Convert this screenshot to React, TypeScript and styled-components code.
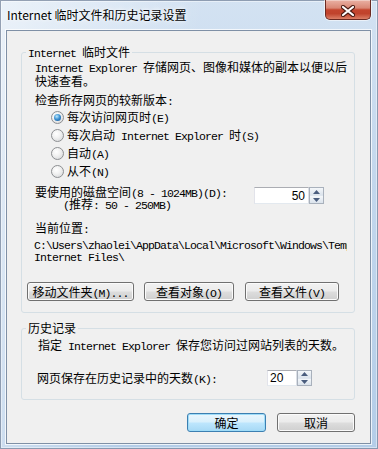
import React from 'react'
import styled, { createGlobalStyle, css } from 'styled-components'

const GlobalStyle = createGlobalStyle`
  html, body {
    margin: 0;
    padding: 0;
    background: #ffffff;
  }
  body {
    font-family: "Noto Sans CJK SC", sans-serif;
    font-size: 12px;
    color: #000;
  }
`

const Win = styled.div`
  width: 378px;
  height: 449px;
  box-sizing: border-box;
  display: flex;
  flex-direction: column;
  padding: 0 7px 6px 6px;
  background:
    linear-gradient(100deg, rgba(255, 255, 255, 0.55) 0%, rgba(255, 255, 255, 0) 45%),
    linear-gradient(180deg, #d3e2f2 0%, #c3d7ed 40%, #b4cde8 100%);
  box-shadow: inset 0 0 0 1px rgba(70, 90, 120, 0.55), inset 0 0 0 2px rgba(255, 255, 255, 0.45);
`

const TitleBar = styled.div`
  height: 30px;
  flex: none;
  display: flex;
  align-items: flex-start;
  justify-content: space-between;
`

const Title = styled.div`
  margin: 7px 0 0 1px;
  font-family: "Noto Sans CJK SC", sans-serif;
  font-size: 12px;
  line-height: 16px;
  color: #000;
  text-shadow: 0 0 6px rgba(255, 255, 255, 0.95), 0 0 3px rgba(255, 255, 255, 0.9);
`

const CloseBtn = styled.div`
  width: 46px;
  height: 20px;
  box-sizing: border-box;
  display: flex;
  align-items: center;
  justify-content: center;
  padding-top: 2px;
  border: 1px solid #6b2a22;
  border-top: none;
  border-radius: 0 0 5px 5px;
  background: linear-gradient(180deg, #eab1a4 0%, #d98775 42%, #c4452e 52%, #c0432c 72%, #dc7f66 100%);
  box-shadow: 0 0 0 1px rgba(255, 255, 255, 0.55), inset 0 1px 0 rgba(255, 255, 255, 0.35);
`

const Client = styled.div`
  flex: 1;
  display: flex;
  flex-direction: column;
  padding: 0 15px 11px 14px;
  background: #f0f0f0;
  border: 1px solid #7f90a6;
  box-shadow: 0 0 0 1px rgba(255, 255, 255, 0.75);
`

const Group = styled.fieldset<{ $top: number }>`
  margin: ${p => p.$top}px 0 0 0;
  padding: 0;
  border: 1px solid #d5dfe5;
  border-radius: 3px;
  min-width: 0;
`

const Legend = styled.legend`
  margin-left: 4px;
  padding: 0 2px;
  line-height: 12px;
  font-size: 12px;
`

const GroupBody = styled.div<{ $bottom: number }>`
  padding: 0 0 ${p => p.$bottom}px 13px;
  display: flex;
  flex-direction: column;
`

const Text = styled.div<{ $lh?: number; $top?: number; $indent?: number }>`
  line-height: ${p => p.$lh ?? 12}px;
  margin-top: ${p => p.$top ?? 0}px;
  padding-left: ${p => p.$indent ?? 0}px;
  white-space: nowrap;
`

const Lat = styled.span`
  font-family: "Liberation Mono", monospace;
  font-size: 11.5px;
  letter-spacing: -0.9px;
  line-height: 0;
  white-space: pre;
`

const RadioList = styled.div`
  margin-top: 1px;
  padding-left: 16px;
  display: flex;
  flex-direction: column;
`

const RadioRow = styled.div`
  height: 18px;
  display: flex;
  align-items: center;
  gap: 3px;
  line-height: 12px;
`

const Radio = styled.span<{ $on?: boolean }>`
  position: relative;
  flex: none;
  width: 13px;
  height: 13px;
  box-sizing: border-box;
  border-radius: 50%;
  border: 1px solid #8d8f92;
  background: radial-gradient(circle at 40% 35%, #ffffff 0%, #f2f2f2 40%, #d0d2d4 100%);
  ${p => p.$on && css`
    &::after {
      content: "";
      position: absolute;
      left: 2px;
      top: 2px;
      width: 7px;
      height: 7px;
      border-radius: 50%;
      background: radial-gradient(circle at 40% 35%, #bfe9fb 0%, #3f94d4 45%, #0d4a8c 100%);
    }
  `}
`

const FieldRow = styled.div<{ $label: number; $top: number; $center?: boolean }>`
  display: grid;
  grid-template-columns: ${p => p.$label}px auto;
  align-items: ${p => (p.$center ? 'center' : 'start')};
  margin-top: ${p => p.$top}px;
`

const Spin = styled.div<{ $w: number; $h: number; $top?: number }>`
  display: flex;
  width: ${p => p.$w}px;
  height: ${p => p.$h}px;
  margin-top: ${p => p.$top ?? 0}px;
`

const SpinField = styled.div<{ $right?: boolean }>`
  flex: 1;
  display: flex;
  align-items: center;
  justify-content: ${p => (p.$right ? 'flex-end' : 'flex-start')};
  padding: 0 3px 0 2px;
  background: #ffffff;
  border: 1px solid;
  border-color: #abadb3 #dbdfe6 #e3e9ef #e2e3ea;
  font-family: "Liberation Sans", Arial, sans-serif;
  font-size: 12px;
`

const SpinButtons = styled.div`
  width: 15px;
  flex: none;
  box-sizing: border-box;
  display: flex;
  flex-direction: column;
  border: 1px solid #a9b1bc;
  background: #dfe6ee;
  gap: 1px;
`

const SpinBtn = styled.div`
  flex: 1;
  display: flex;
  align-items: center;
  justify-content: center;
  background: linear-gradient(180deg, #f4f7fa 0%, #dbe3ec 100%);
`

const PathBox = styled.div`
  margin-top: 4px;
  margin-left: -1px;
  padding-bottom: 2px;
  width: 313px;
  overflow: hidden;
`

const ButtonRow = styled.div<{ $top: number; $shift?: number }>`
  display: flex;
  margin-top: ${p => p.$top}px;
  margin-left: ${p => p.$shift ?? 0}px;
`

const Button = styled.div<{ $w: number; $gap?: number; $primary?: boolean }>`
  width: ${p => p.$w}px;
  height: 19px;
  box-sizing: border-box;
  margin-left: ${p => p.$gap ?? 0}px;
  display: flex;
  align-items: center;
  justify-content: center;
  line-height: 12px;
  border: 1px solid #707070;
  border-radius: 3px;
  background: linear-gradient(180deg, #f2f2f2 0%, #ebebeb 48%, #dddddd 52%, #cfcfcf 100%);
  box-shadow: inset 0 0 0 1px #fbfbfb;
  ${p => p.$primary && css`
    border-color: #3c7fb1;
    background: linear-gradient(180deg, #eaf6fd 0%, #d9f0fc 48%, #bee6fd 52%, #a7d9f5 100%);
    box-shadow: inset 0 0 0 1px #9fdcf8;
  `}
`

const Footer = styled.div`
  display: flex;
  justify-content: flex-end;
  margin-top: 13px;
`

const T = ({ s }: { s: string }) => (
  <>
    {s
      .split(/([\x20-\x7e]+)/)
      .filter(Boolean)
      .map((part, i) => (/^[\x20-\x7e]+$/.test(part) ? <Lat key={i}>{part}</Lat> : part))}
  </>
)

const Arrow = ({ up }: { up?: boolean }) => (
  <svg width="7" height="4" viewBox="0 0 7 4">
    <path d={up ? 'M0 4 L3.5 0 L7 4 Z' : 'M0 0 L3.5 4 L7 0 Z'} fill="#4a5d7e" />
  </svg>
)

const SpinBox = ({ value, w, h, right, top }: { value: string; w: number; h: number; right?: boolean; top?: number }) => (
  <Spin $w={w} $h={h} $top={top}>
    <SpinField $right={right}>{value}</SpinField>
    <SpinButtons>
      <SpinBtn><Arrow up /></SpinBtn>
      <SpinBtn><Arrow /></SpinBtn>
    </SpinButtons>
  </Spin>
)

const radios = [
  { label: '每次访问网页时(E)', on: true },
  { label: '每次启动 Internet Explorer 时(S)' },
  { label: '自动(A)' },
  { label: '从不(N)' },
]

export default function App() {
  return (
    <>
      <GlobalStyle />
      <Win>
        <TitleBar>
          <Title>Internet 临时文件和历史记录设置</Title>
          <CloseBtn>
            <svg width="14" height="12" viewBox="0 0 14 12">
              <path d="M2 2 L12 10 M12 2 L2 10" stroke="#4a1a12" strokeWidth="4.2" strokeLinecap="round" />
              <path d="M2 2 L12 10 M12 2 L2 10" stroke="#ffffff" strokeWidth="2.2" strokeLinecap="round" />
            </svg>
          </CloseBtn>
        </TitleBar>

        <Client>
          <Group $top={15}>
            <Legend><T s="Internet 临时文件" /></Legend>
            <GroupBody $bottom={11}>
              <Text $lh={14} $top={2}>
                <div><T s="Internet Explorer 存储网页、图像和媒体的副本以便以后" /></div>
                <div>快速查看。</div>
              </Text>
              <Text $lh={14} $top={5}><T s="检查所存网页的较新版本:" /></Text>
              <RadioList>
                {radios.map(r => (
                  <RadioRow key={r.label}>
                    <Radio $on={r.on} />
                    <span><T s={r.label} /></span>
                  </RadioRow>
                ))}
              </RadioList>
              <FieldRow $label={219} $top={6}>
                <Text>
                  <div><T s="要使用的磁盘空间(8 - 1024MB)(D):" /></div>
                  <Text $indent={28}><T s="(推荐: 50 - 250MB)" /></Text>
                </Text>
                <SpinBox value="50" w={70} h={17} right top={1} />
              </FieldRow>
              <Text $top={12}><T s="当前位置:" /></Text>
              <PathBox>
                <Text><T s={'C:\\Users\\zhaolei\\AppData\\Local\\Microsoft\\Windows\\Temporary'} /></Text>
                <Text><T s={'Internet Files\\'} /></Text>
              </PathBox>
              <ButtonRow $top={18} $shift={-8}>
                <Button $w={107}><span><T s="移动文件夹(M)..." /></span></Button>
                <Button $w={90} $gap={10}><span><T s="查看对象(O)" /></span></Button>
                <Button $w={94} $gap={11}><span><T s="查看文件(V)" /></span></Button>
              </ButtonRow>
            </GroupBody>
          </Group>

          <Group $top={9}>
            <Legend>历史记录</Legend>
            <GroupBody $bottom={13}>
              <Text $top={5} $indent={3}><T s="指定 Internet Explorer 保存您访问过网站列表的天数。" /></Text>
              <FieldRow $label={232} $top={19} $center>
                <Text $indent={2}><T s="网页保存在历史记录中的天数(K):" /></Text>
                <SpinBox value="20" w={45} h={16} />
              </FieldRow>
            </GroupBody>
          </Group>

          <Footer>
            <Button $w={79} $primary>确定</Button>
            <Button $w={78} $gap={11}>取消</Button>
          </Footer>
        </Client>
      </Win>
    </>
  )
}
